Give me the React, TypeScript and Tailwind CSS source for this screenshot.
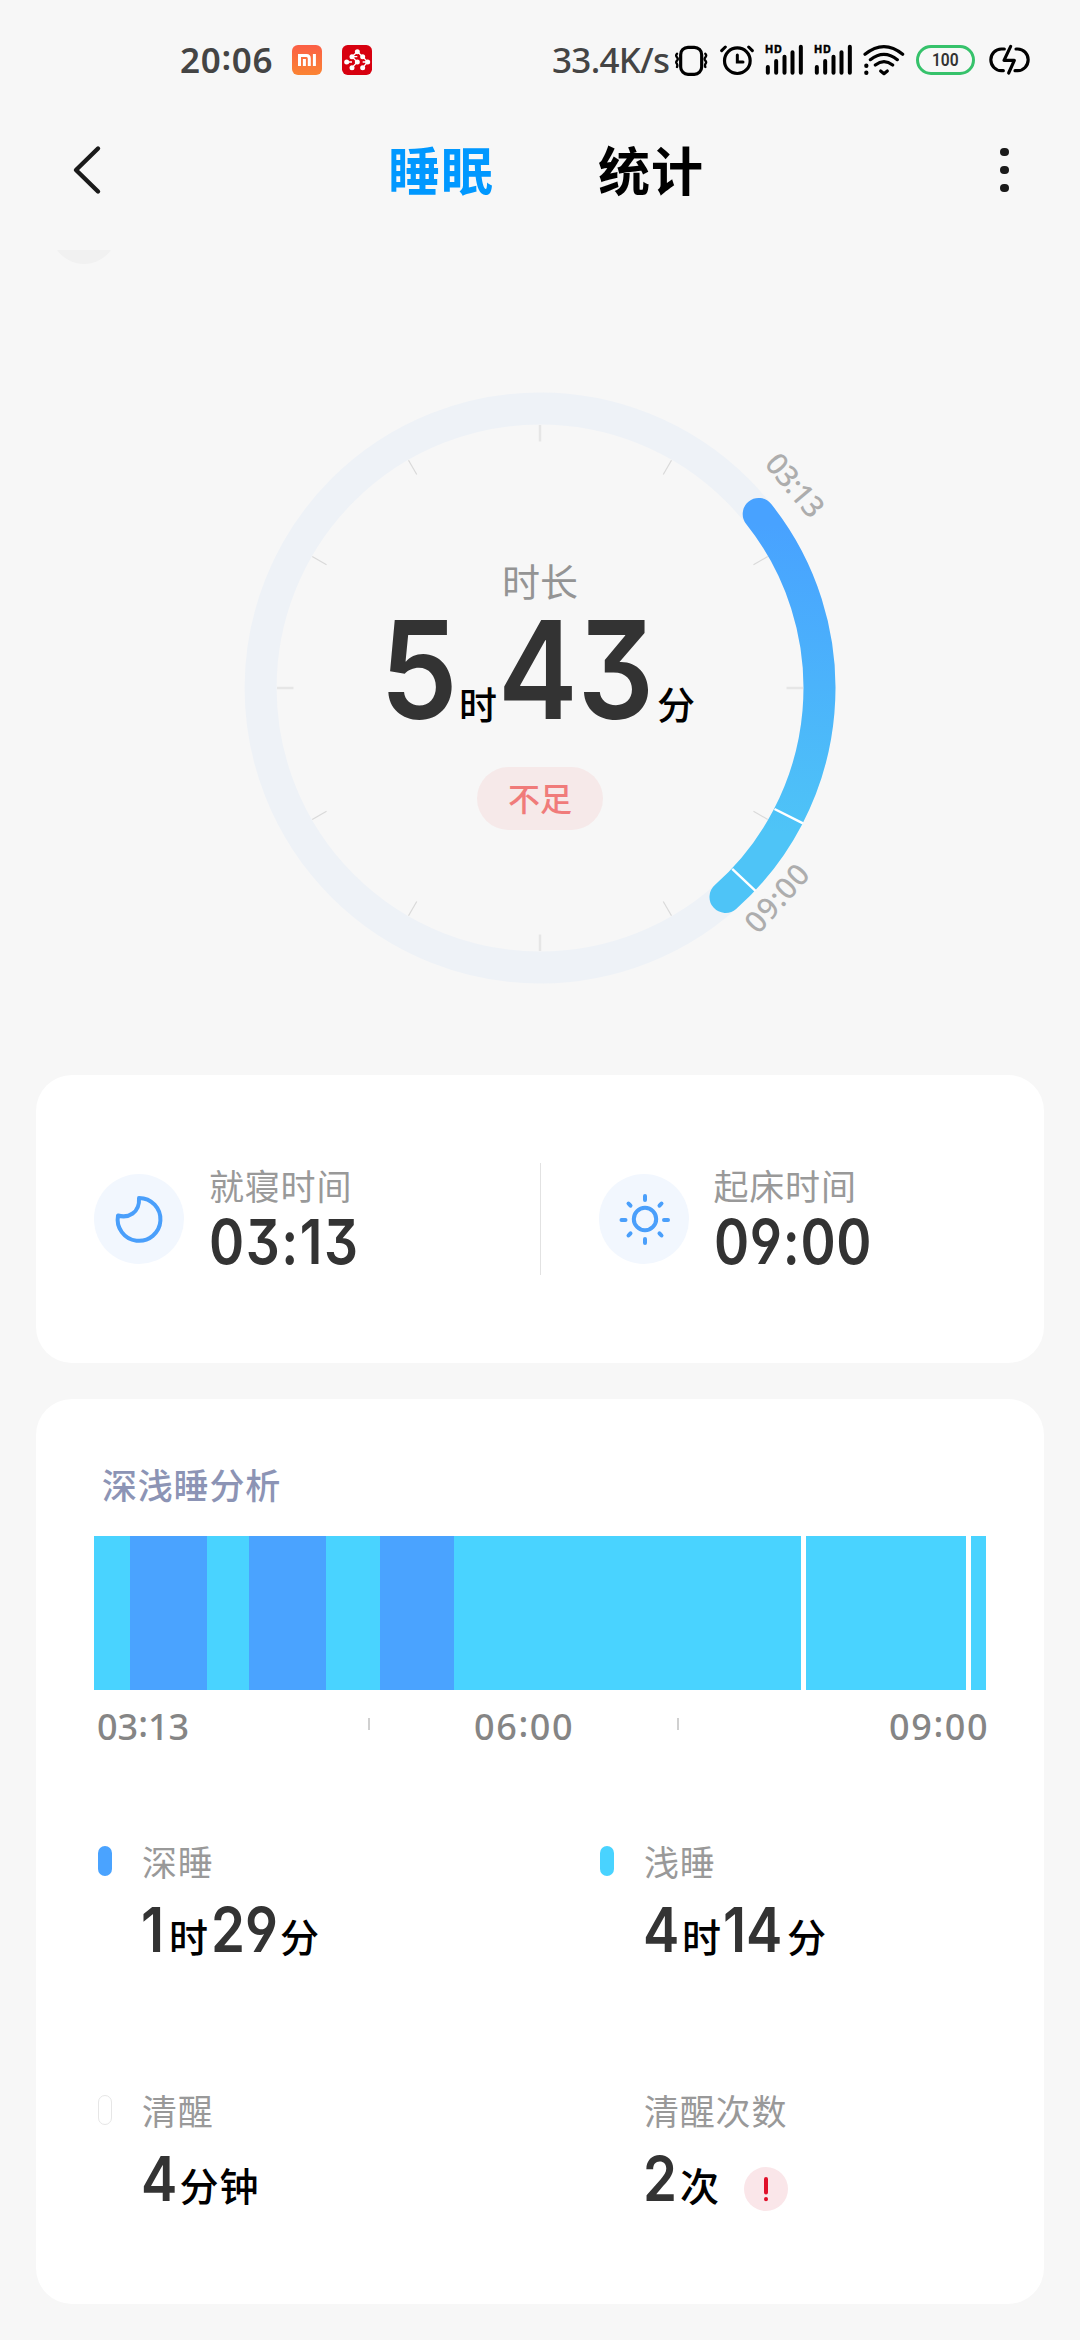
import type { ReactNode } from "react";

const cjk = "font-['Noto_Sans','Noto_Sans_CJK_SC',sans-serif]";
const digit =
  "font-['Inter','Noto_Sans_CJK_SC',sans-serif] [font-feature-settings:'cv09','cv03','cv04'] font-semibold text-[#333] shrink-0";

function VibrateIcon() {
  return (
    <svg className="ml-[6px] h-[32px] w-[34px]" viewBox="402 70 102 96" fill="none" stroke="#000" strokeLinecap="round">
      <rect x="422" y="80" width="63" height="81" rx="22" strokeWidth="9.5" />
      <path d="M411 99q-5 6 0 11q5 5 0 10q-5 5 0 10q2 4 0 9M496 99q5 6 0 11q-5 5 0 10q5 5 0 10q-2 4 0 9" strokeWidth="7" />
    </svg>
  );
}

function AlarmIcon() {
  return (
    <svg className="ml-[12px] h-[32px] w-[34px]" viewBox="540 70 102 96" fill="none" stroke="#000" strokeLinecap="round">
      <circle cx="592" cy="120" r="38.5" strokeWidth="9.5" />
      <path d="M545 90L556 79M637 90L626 79" strokeWidth="9" />
      <path d="M592 103V124H609" strokeWidth="9" />
    </svg>
  );
}

function SignalIcon({ className }: { className: string }) {
  return (
    <svg className={className} viewBox="676 70 116 96" stroke="#000" strokeLinecap="round" strokeWidth="12">
      <path d="M684 139V156M709 121V156M734 108V156M758 95V156M783 78V156" fill="none" />
      <text x="676" y="96" fontFamily="Inter, sans-serif" fontSize="31" fontWeight="800" strokeWidth="1" textLength="50">
        HD
      </text>
    </svg>
  );
}

function WifiIcon() {
  return (
    <svg className="ml-[10px] h-[32px] w-[42px]" viewBox="968 70 126 96" fill="none" stroke="#000" strokeWidth="9.5" strokeLinecap="round">
      <path d="M974 101Q1031 55 1087 101M990 117Q1031 85 1071 117M1005 133Q1031 113 1057 133" />
      <path d="M1021 151L1031 159L1041 151" strokeLinejoin="round" />
      <path d="M978 135V135.5M978 156V156.5" strokeWidth="13" />
    </svg>
  );
}

function ChargeIcon() {
  return (
    <svg className="ml-[14px] h-[32px] w-[41px]" viewBox="1343 70 123 96" fill="none" stroke="#000" strokeWidth="9.5" strokeLinecap="round" strokeLinejoin="round">
      <path d="M1389 85H1380A31.5 32.5 0 0 0 1380 150H1386M1424 85H1429A31.5 32.5 0 0 1 1429 150H1421" />
      <path d="M1408 77L1388 119H1419L1402 157" />
    </svg>
  );
}

/* Clock text with its colon lifted to the middle of the digit height. */
function Clock({ time }: { time: string }) {
  const [h, m] = time.split(":");
  return (
    <>
      {h}
      <span className="relative -top-[3px]">:</span>
      {m}
    </>
  );
}

function StatusBar() {
  return (
    <div className="flex h-[119px] items-center pl-[180px]">
      <span className="w-[112px] text-[35px] leading-none font-semibold tracking-[0.7px] text-[#444]">
        <Clock time="20:06" />
      </span>
      <svg className="h-[30px] w-[30px]" viewBox="0 0 30 30">
        <defs>
          <linearGradient id="mi" x1="0" y1="0" x2="0" y2="1">
            <stop offset="0" stopColor="#fb5f46" />
            <stop offset="1" stopColor="#fb8433" />
          </linearGradient>
        </defs>
        <rect width="30" height="30" rx="6" fill="url(#mi)" />
        <path d="M7.5 21V10.5H14.5Q17.3 10.5 17.3 13.5V21M12.4 14V21M22.4 9V21" fill="none" stroke="#fff" strokeWidth="3" />
      </svg>
      <svg className="ml-[20px] h-[30px] w-[30px]" viewBox="575 71 90 90">
        <rect x="575" y="71" width="90" height="90" rx="17" fill="#d7000f" />
        <path
          d="M621 91L637 106L652 122L637 139M605 139L621 122L605 106L621 91M605 106H621M637 122H652M589 122H605"
          fill="none"
          stroke="#fff"
          strokeWidth="4"
        />
        {[[621, 91], [605, 106], [637, 106], [589, 122], [621, 122], [652, 122], [605, 139], [637, 139]].map(([x, y]) => (
          <circle key={`${x}-${y}`} cx={x} cy={y} r="7.5" fill="#fff" />
        ))}
      </svg>
      <span className="ml-[180px] w-[116px] text-[35px] leading-none font-medium tracking-[-0.7px] whitespace-nowrap text-[#444]">33.4K/s</span>
      <VibrateIcon />
      <AlarmIcon />
      <SignalIcon className="ml-[11px] h-[32px] w-[39px]" />
      <SignalIcon className="ml-[10px] h-[32px] w-[39px]" />
      <WifiIcon />
      <div className="ml-[11px] flex h-[30px] w-[59px] items-center justify-center rounded-full border-[3px] border-[#36c26b] text-[#333]">
        <span className="scale-x-[0.82] font-['Roboto',sans-serif] text-[19px] leading-none font-semibold">100</span>
      </div>
      <ChargeIcon />
    </div>
  );
}

function Header() {
  return (
    <div className="flex h-[102px] items-center pl-[71px]">
      <svg className="h-[52px] w-[32px]" viewBox="0 0 32 52" fill="none" stroke="#1a1a1a" strokeWidth="4.4" strokeLinecap="round" strokeLinejoin="round">
        <path d="M27 4.5L5 26L27 47.5" />
      </svg>
      <span className="ml-[285px] pt-[2px] text-[52px] leading-none font-bold tracking-[1px] text-[#0098ff]">睡眠</span>
      <span className="ml-[104px] pt-[2px] text-[52px] leading-none font-bold tracking-[1px] text-black">统计</span>
      <div className="ml-[296px] flex flex-col gap-[9.5px]">
        <i className="size-[8.5px] rounded-full bg-[#1a1a1a]" />
        <i className="size-[8.5px] rounded-full bg-[#1a1a1a]" />
        <i className="size-[8.5px] rounded-full bg-[#1a1a1a]" />
      </div>
    </div>
  );
}

function Dial() {
  return (
    <div className="relative mx-auto h-[640px] w-[640px]">
      <svg className="absolute inset-0 h-full w-full overflow-visible" viewBox="-320 -320 640 640" fill="none">
        <defs>
          <linearGradient id="arc" gradientUnits="userSpaceOnUse" x1="220" y1="-165" x2="190" y2="140">
            <stop offset="0" stopColor="#48a2ff" />
            <stop offset="1" stopColor="#4ec4f7" />
          </linearGradient>
        </defs>
        <circle r="279.4" stroke="#eef2f7" strokeWidth="32" />
        {Array.from({ length: 12 }, (_, i) => (
          <path key={i} d="M0 -263V-246.5" stroke={i % 3 ? "#d9d9d9" : "#e6e6e6"} strokeWidth={i % 3 ? 1.2 : 2.5} transform={`rotate(${i * 30})`} />
        ))}
        <path d="M218.7 -174A279.4 279.4 0 0 1 185.5 209" stroke="url(#arc)" strokeWidth="32" strokeLinecap="round" />
        <path d="M234.5 121L263 135.4M192.2 180.8L215.5 202.9" stroke="#fff" strokeWidth="2.4" />
        <g fill="#adadad" fontFamily="'Noto Sans', sans-serif" fontSize="30" fontWeight="500" textAnchor="middle">
          <text transform="translate(255.3 -202.8) rotate(50)" y="11" textLength="73">03:13</text>
          <text transform="translate(236.7 210) rotate(-48.3)" y="11" textLength="80">09:00</text>
        </g>
      </svg>
      <div className="relative flex flex-col items-center">
        <div className="mt-[194px] text-[38px] leading-[38px] text-[#949494]">时长</div>
        <div className="mt-[8px] flex h-[123px] w-[314px] items-baseline leading-[123px]">
          <span className={`${digit} -ml-[3px] w-[79px] origin-left scale-x-[0.91] text-[136px]`}>5</span>
          <span className="w-[39px] shrink-0 text-[38px] font-medium text-black">时</span>
          <span className={`${digit} w-[159px] origin-left scale-x-[0.88] text-[136px]`}>43</span>
          <span className="shrink-0 text-[38px] font-medium text-black">分</span>
        </div>
        <div className="mt-[36px] flex h-[63px] w-[126px] items-center justify-center rounded-full bg-[#f6e9e9] pt-px text-[32px] leading-none font-medium text-[#f07b7a]">
          不足
        </div>
      </div>
    </div>
  );
}

function TimeCell({ icon, label, time, spacing }: { icon: ReactNode; label: string; time: string; spacing: string }) {
  return (
    <div className="flex flex-1 items-center pl-[58px]">
      <svg className="size-[90px] rounded-full bg-[#f2f7fe]" viewBox="0 0 90 90" fill="none" stroke="#4a9ffb" strokeWidth="4" strokeLinecap="round" strokeLinejoin="round">
        {icon}
      </svg>
      <div className="ml-[25px] flex flex-col">
        <span className="pt-[2px] text-[35px] leading-[36px] tracking-[0.8px] text-[#999]">{label}</span>
        <span className={`${digit} mt-[7px] origin-left scale-x-[0.86] text-[62px] leading-[60px] ${spacing}`}>{time}</span>
      </div>
    </div>
  );
}

function BedCard() {
  return (
    <div className="mx-[36px] flex h-[288px] items-center rounded-[36px] bg-white">
      <TimeCell label="就寝时间" time="03:13" spacing="tracking-[1.8px]" icon={<path d="M45 24A21.4 21.4 0 1 1 24 41.5C34 44.5 46 39 45 24Z" />} />
      <div className="h-[112px] w-px bg-[#e2e2e2]" />
      <TimeCell
        label="起床时间"
        time="09:00"
        spacing="tracking-[0.8px]"
        icon={
          <>
            <circle cx="46" cy="45" r="11.2" />
            <path d="M46 22V26M46 65V69M22.5 46H26.5M65 46H69M29.5 29.5L31.5 31.7M62.5 29.5L60.5 31.7M29.5 61.5L31.5 59.3M62.5 61.5L60.5 59.3" />
          </>
        }
      />
    </div>
  );
}

const light = "bg-[#49d3ff]";
const deep = "bg-[#4aa3ff]";
const awake = "bg-white";
const segments: [number, string][] = [
  [36, light], [77, deep], [42, light], [76.5, deep], [54, light], [74.2, deep],
  [347.3, light], [5, awake], [159.7, light], [5, awake], [15.3, light],
];

function Stat({ pill, label, children }: { pill: string; label: string; children: ReactNode }) {
  return (
    <div className="flex h-[249px]">
      <i className={`mt-px h-[30px] w-[14px] rounded-full ${pill}`} />
      <div className="ml-[30px] flex flex-col">
        <span className="text-[35px] leading-[36px] tracking-[0.8px] text-[#999]">{label}</span>
        <div className="mt-[9px] -ml-px flex items-baseline text-[39px] leading-[80px] font-medium tracking-[1px] text-black">{children}</div>
      </div>
    </div>
  );
}

function Num({ children, className }: { children: string; className: string }) {
  return (
    <span className={`${digit} origin-left scale-x-[0.88] text-[62px] tracking-normal ${className}`}>{children}</span>
  );
}

function AnalysisCard() {
  return (
    <div className="mx-[36px] mt-[36px] h-[905px] rounded-[36px] bg-white px-[58px] pt-[69px]">
      <div className="pl-[8px] text-[35px] leading-[36px] font-medium tracking-[0.8px] text-[#8c94b5]">深浅睡分析</div>
      <div className="mt-[32px] flex h-[154px] w-[892px]">
        {segments.map(([w, color], i) => (
          <div key={i} className={color} style={{ width: w }} />
        ))}
      </div>
      <div className="mt-[17px] flex h-[40px] w-[892px] items-center pl-[3px] text-[36px] leading-none font-medium text-[#858585]">
        <span className="w-[271px] shrink-0">
          <Clock time="03:13" />
        </span>
        <i className="mb-[7px] h-[12px] w-[2px] shrink-0 bg-[#d0d0d0]" />
        <span className="ml-[104px] w-[203px] shrink-0 tracking-[1.6px]">
          <Clock time="06:00" />
        </span>
        <i className="mb-[7px] h-[12px] w-[2px] shrink-0 bg-[#d0d0d0]" />
        <span className="ml-[210px] shrink-0 tracking-[1.6px] whitespace-nowrap">
          <Clock time="09:00" />
        </span>
      </div>
      <div className="mt-[98px] grid grid-cols-[502px_1fr] pl-[4px]">
        <Stat pill={deep} label="深睡">
          <Num className="w-[28px]">1</Num>时<Num className="ml-[2px] w-[69px]">29</Num>分
        </Stat>
        <Stat pill={light} label="浅睡">
          <Num className="w-[39px]">4</Num>时<Num className="ml-[1px] w-[64px]">14</Num>分
        </Stat>
        <Stat pill="border border-[#e6e6e6] bg-white" label="清醒">
          <Num className="w-[38.5px]">4</Num>分钟
        </Stat>
        <Stat pill="" label="清醒次数">
          <Num className="w-[37px]">2</Num>次
          <svg className="ml-[24px] size-[44px] translate-y-[10px] self-baseline" viewBox="0 0 44 44">
            <circle cx="22" cy="22" r="22" fill="#fae6e9" />
            <path d="M22 12V25.5M22 32V32.2" stroke="#e0102a" strokeWidth="4" strokeLinecap="round" />
          </svg>
        </Stat>
      </div>
    </div>
  );
}

export default function App() {
  return (
    <div className={`h-[2340px] w-[1080px] overflow-hidden bg-[#f7f7f7] ${cjk}`}>
      <StatusBar />
      <Header />
      <div className="mt-[29px] ml-[51px] flex h-[14px] w-[66px] items-end overflow-hidden">
        <div className="size-[66px] shrink-0 rounded-full bg-[#f1f1f1]" />
      </div>
      <div className="mt-[104px] mb-[67px]">
        <Dial />
      </div>
      <BedCard />
      <AnalysisCard />
    </div>
  );
}
